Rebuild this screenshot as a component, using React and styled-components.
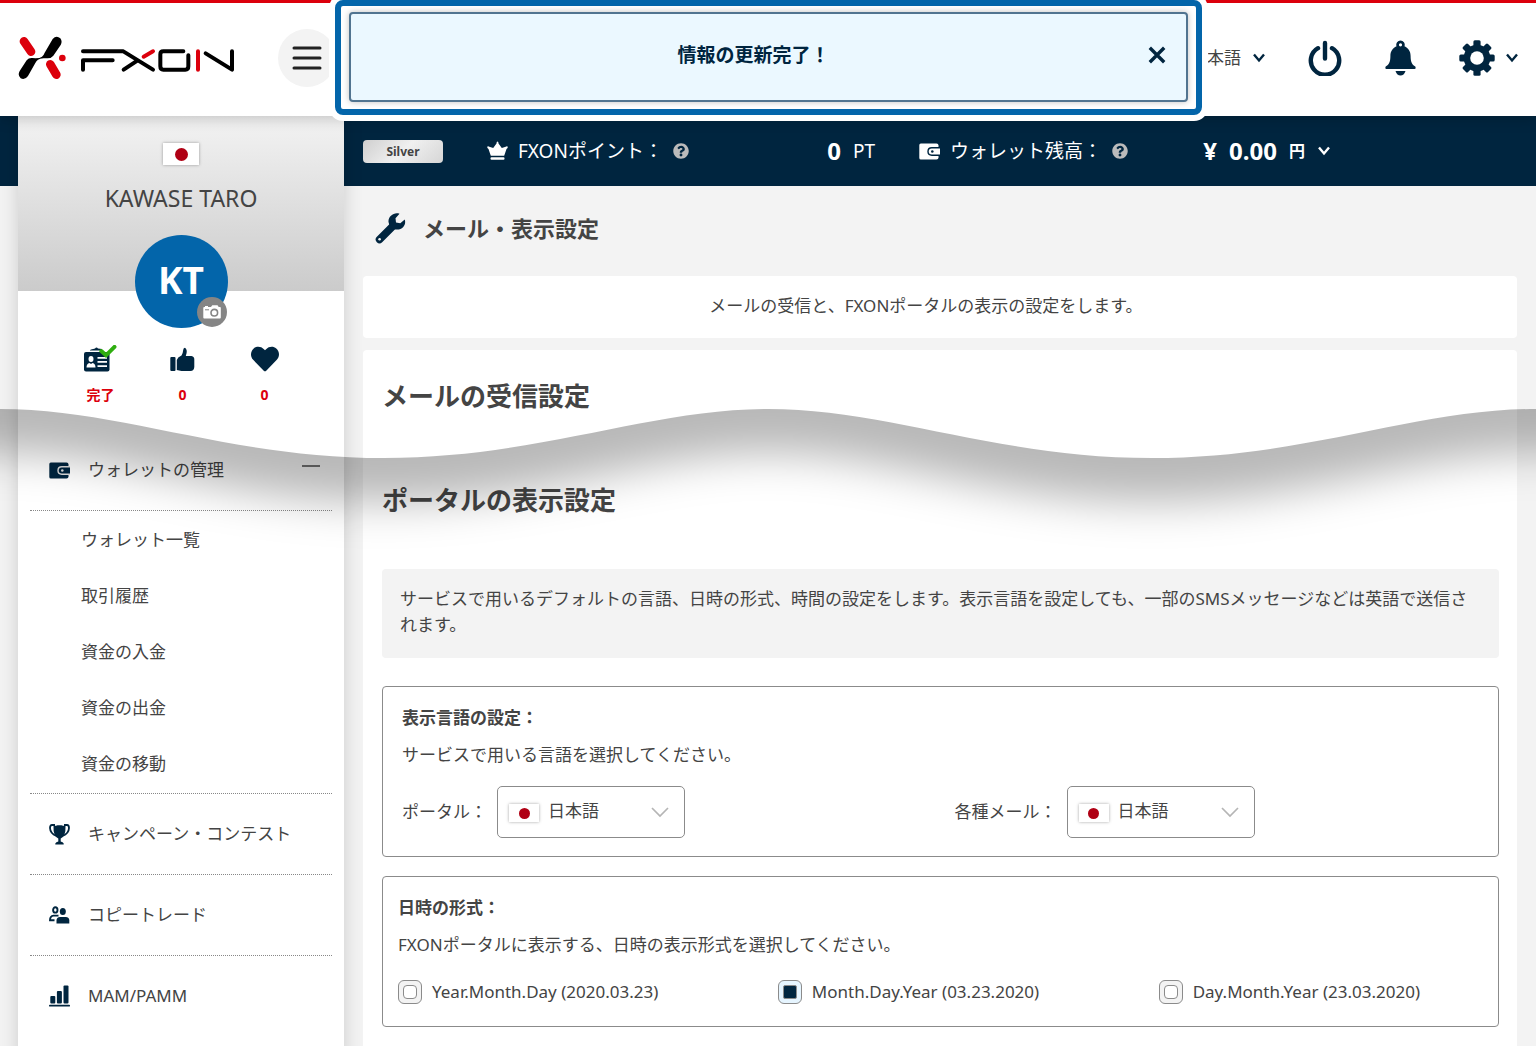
import React from "react";
import styled, { createGlobalStyle, css } from "styled-components";
import { FaHeart, FaQuestionCircle } from "react-icons/fa";

const navy = "#00253f";
const red = "#dc000c";
const blue = "#0365aa";
const ink = "#444";

const GlobalStyle = createGlobalStyle`
  *, *::before, *::after { box-sizing: border-box; }
  body {
    margin: 0;
    background: #f3f3f3;
    color: ${ink};
    font: 400 17px/26px "Noto Sans", "Noto Sans CJK JP", sans-serif;
  }
  h1, h2, h3, p, ul { margin: 0; padding: 0; }
  ul { list-style: none; }
  button, select { font: inherit; color: inherit; }
  a { color: inherit; text-decoration: none; }
  svg { display: block; flex: none; }
`;

/* ---------- layout ---------- */

const Page = styled.div`
  position: relative;
  display: flex;
  flex-direction: column;
  min-height: 100vh;
  overflow: hidden;
`;

const Header = styled.header`
  position: relative;
  z-index: 2;
  display: flex;
  align-items: center;
  height: 116px;
  padding: 0 18px 3px;
  border-top: 3px solid ${red};
  background: #fff;
  box-shadow: 0 2px 14px rgba(0, 0, 0, 0.22);
`;

const Body = styled.div`
  flex: 1;
  display: flex;
  padding-left: 18px;
  background: linear-gradient(${navy} 70px, #f3f3f3 70px);
`;

const Sidebar = styled.aside`
  position: relative;
  flex: none;
  width: 326px;
  background: #fff;
  box-shadow: 0 0 18px rgba(0, 0, 0, 0.16);
`;

const Main = styled.main`
  flex: 1;
  min-width: 0;
  display: flex;
  flex-direction: column;
`;

/* ---------- header ---------- */

const PlainButton = styled.button`
  display: flex;
  align-items: center;
  justify-content: center;
  padding: 0;
  border: 0;
  background: none;
  color: ${navy};
  cursor: pointer;
`;

const MenuButton = styled(PlainButton)`
  width: 58px;
  height: 58px;
  margin-left: 43px;
  border-radius: 50%;
  background: #f3f3f3;
  color: #222;
`;

const HeaderTools = styled.div`
  display: flex;
  align-items: center;
  margin-left: auto;
  gap: 43px;
`;

const GearButton = styled(PlainButton)`
  gap: 11px;
`;

const Dropdown = styled.span`
  display: inline-flex;
  align-items: center;
  gap: 12px;
  select {
    appearance: none;
    padding: 0;
    border: 0;
    background: none;
    font-size: 17px;
    cursor: pointer;
  }
  svg { color: ${navy}; }
  ${(p) => p.$bold && css`
    select { font-size: 16px; font-weight: 700; }
    svg { color: #fff; }
  `}
`;

/* ---------- notice over the header ---------- */

const NoticeFrame = styled.div`
  position: absolute;
  z-index: 3;
  top: 0;
  left: 335px;
  right: 334px;
  height: 115px;
  padding: 6px 8px 7px;
  border: 6px solid ${blue};
  border-radius: 8px;
  background: #fff;
  box-shadow: 0 0 0 6px #fff;
`;

const Notice = styled.div`
  display: flex;
  align-items: center;
  height: 90px;
  padding: 0 20px 4px 8px;
  border: 2px solid #517490;
  border-radius: 4px;
  background: #ebf8ff;
  color: ${navy};
  box-shadow: 0 0 6px rgba(0, 0, 0, 0.25);
`;

const NoticeText = styled.p`
  flex: 1;
  text-align: center;
  font-size: 19px;
  font-weight: 700;
`;

/* ---------- sidebar ---------- */

const Profile = styled.div`
  display: flex;
  flex-direction: column;
  align-items: center;
  height: 175px;
  padding-top: 27px;
  background: linear-gradient(#f3f3f3, #cbcbcb);
`;

const Flag = styled.span`
  display: flex;
  align-items: center;
  justify-content: center;
  flex: none;
  width: ${(p) => (p.$large ? 36 : 30)}px;
  height: ${(p) => (p.$large ? 22 : 18)}px;
  background: #fff;
  box-shadow: 0 0 3px rgba(0, 0, 0, 0.35);
  &::before {
    content: "";
    width: ${(p) => (p.$large ? 13 : 11)}px;
    height: ${(p) => (p.$large ? 13 : 11)}px;
    border-radius: 50%;
    background: #b00014;
  }
`;

const UserName = styled.p`
  margin-top: 20px;
  font-size: 23px;
`;

const Avatar = styled.div`
  position: relative;
  display: flex;
  flex: none;
  align-items: center;
  justify-content: center;
  width: 93px;
  height: 93px;
  margin-top: 24px;
  padding-bottom: 4px;
  border-radius: 50%;
  background: ${blue};
  color: #fff;
  font-family: "Open Sans", "Noto Sans", sans-serif;
  font-size: 37px;
  font-weight: 700;
`;

const CameraButton = styled(PlainButton)`
  position: absolute;
  right: 1px;
  bottom: 1px;
  width: 30px;
  height: 30px;
  border-radius: 50%;
  background: #858585;
  color: #fff;
`;

const Stats = styled.ul`
  display: flex;
  justify-content: center;
  height: 139px;
  padding: 52px 0 0 3px;
  li {
    display: flex;
    flex-direction: column;
    align-items: center;
    gap: 8px;
    width: 82px;
    color: ${navy};
  }
  strong {
    color: ${red};
    font-size: 14px;
    line-height: 24px;
  }
`;

const StatIcon = styled.span`
  display: flex;
  align-items: center;
  height: 32px;
`;

const Nav = styled.nav`
  margin: 0 12px;
`;

const NavGroup = styled.div`
  border-bottom: 1px dotted #888;
  &:last-child { border-bottom: 0; }
`;

const NavItem = styled.a`
  display: flex;
  align-items: center;
  height: 80px;
  padding: 0 12px 0 19px;
  gap: 18px;
  svg { color: ${navy}; }
`;

const Minus = styled.span`
  width: 18px;
  height: 2px;
  margin: 0 0 8px auto;
  background: #777;
`;

const SubList = styled.ul`
  padding: 1px 0 1px 51px;
  border-top: 1px dotted #888;
  a {
    display: flex;
    align-items: center;
    height: 56px;
  }
`;

/* ---------- main column ---------- */

const StatusBar = styled.div`
  display: flex;
  align-items: center;
  gap: 44px;
  height: 70px;
  padding: 0 19px;
  background: ${navy};
  color: #fff;
  font-size: 19px;
`;

const Rank = styled.span`
  width: 80px;
  height: 23px;
  border-radius: 4px;
  background: linear-gradient(135deg, #cfcfcf, #f0f0f0 50%, #d6d6d6);
  color: ${ink};
  text-align: center;
  font-size: 12px;
  font-weight: 700;
  line-height: 23px;
`;

const StatusGroup = styled.div`
  display: flex;
  align-items: center;
  justify-content: space-between;
  width: ${(p) => p.$width}px;
`;

const StatusLabel = styled.span`
  display: flex;
  align-items: center;
  gap: 10px;
`;

const HelpButton = styled(PlainButton)`
  color: #bbb;
`;

const Amount = styled.span`
  display: flex;
  align-items: center;
  gap: 12px;
  strong { font-size: 24px; }
`;

const TitleRow = styled.div`
  display: flex;
  align-items: center;
  gap: 17px;
  height: 90px;
  padding: 0 31px 6px;
  svg { color: ${navy}; }
  h1 { font-size: 22px; }
`;

const Content = styled.div`
  flex: 1;
  display: flex;
  flex-direction: column;
  gap: 12px;
  padding: 0 19px;
`;

const Intro = styled.p`
  padding: 17px 46px 19px 18px;
  border-radius: 4px;
  background: #fff;
  text-align: center;
`;

const Panel = styled.section`
  flex: 1;
  display: flex;
  flex-direction: column;
  padding: 0 18px 18px 19px;
  border-radius: 4px 4px 0 0;
  background: #fff;
`;

const SectionTitle = styled.h2`
  padding-top: 26px;
  height: 104px;
  font-size: 26px;
  line-height: 40px;
`;

const Note = styled.p`
  margin: 11px 0 28px;
  padding: 17px 28px 20px 18px;
  border-radius: 4px;
  background: #f3f3f3;
`;

const Card = styled.section`
  margin-bottom: 19px;
  padding: 18px ${(p) => p.$side}px;
  border: 1px solid #8b8b8b;
  border-radius: 4px;
  h3 { font-size: 17px; line-height: 26px; }
  h3 + p { margin-top: 11px; }
`;

const SelectRow = styled.div`
  display: grid;
  grid-template-columns: 1fr 1fr;
  gap: 28px;
  margin-top: 18px;
`;

const Field = styled.div`
  display: flex;
  align-items: center;
  gap: 10px;
`;

const SelectBox = styled.span`
  position: relative;
  width: 188px;
  height: 52px;
  select {
    appearance: none;
    width: 100%;
    height: 100%;
    padding: 0 40px 2px 50px;
    border: 1px solid #8b8b8b;
    border-radius: 5px;
    background: #fff;
  }
`;

const SelectFlag = styled(Flag)`
  position: absolute;
  left: 12px;
  top: 18px;
  pointer-events: none;
`;

const SelectArrow = styled.svg`
  position: absolute;
  right: 16px;
  top: 21px;
  pointer-events: none;
`;

const RadioRow = styled.div`
  display: flex;
  justify-content: space-between;
  margin-top: 21px;
  padding: 0 63px 3px 0;
`;

const RadioLabel = styled.label`
  display: flex;
  align-items: center;
  gap: 10px;
`;

const SquareRadio = styled.input`
  appearance: none;
  display: grid;
  place-items: center;
  width: 24px;
  height: 24px;
  margin: 0;
  border: 1px solid #8b8b8b;
  border-radius: 6px;
  background: #f3f3f3;
  &::before {
    content: "";
    width: 14px;
    height: 14px;
    border: 1px solid #8b8b8b;
    border-radius: 4px;
    background: #fff;
  }
  &:checked { background: #e6f5ff; }
  &:checked::before { background: ${navy}; border-radius: 2px; }
`;

/* Torn-page wave lying over both columns */
const Wave = styled.svg`
  position: absolute;
  z-index: 1;
  left: 0;
  top: 400px;
  width: 100%;
  height: 180px;
  pointer-events: none;
`;

/* ---------- drawings ---------- */

const Logo = () => (
  <svg width="217" height="44" viewBox="54 108 651 132" fill="none" strokeLinecap="round" strokeLinejoin="round" role="img" aria-label="FXON">
    <path d="M72 124L93 155M151 193L169 224" stroke={red} strokeWidth="26" />
    <circle cx="187" cy="174" r="10" fill={red} />
    <path
      fill="#000"
      d="M158 117Q169 105 181 115Q188 124 182 135L160 167Q153 176 140 175Q120 173 114 179Q110 182 106 189L84 228Q75 241 62 235Q52 226 59 213L80 181Q86 173 97 174Q118 176 126 170Q131 166 134 158Z"
    />
    <g stroke="#000" strokeWidth="12">
      <path d="M249 154H370L459 209M249 209V181H338M371 209L412 182" />
      <path d="M550 154H490Q481 154 481 163V199Q481 209 490 209H556Q565 209 565 199V166" />
      <path d="M617 160L696 209V154" />
    </g>
    <path d="M431 170L459 154M594 154V209" stroke={red} strokeWidth="12" />
  </svg>
);

const MenuIcon = () => (
  <svg width="30" height="26" viewBox="0 0 30 26" stroke="currentColor" strokeWidth="3" strokeLinecap="round">
    <path d="M2 3H28M2 13H28M2 23H28" />
  </svg>
);

const Chevron = () => (
  <svg width="12" height="10" viewBox="0 0 12 10" fill="none" stroke="currentColor" strokeWidth="2.4">
    <path d="M1 1.500L6 7.500L11 1.500" />
  </svg>
);

const CloseIcon = () => (
  <svg width="18" height="18" viewBox="0 0 18 18" stroke="currentColor" strokeWidth="3.400">
    <path d="M1.800 1.800L16.200 16.200M16.200 1.800L1.800 16.200" />
  </svg>
);

const PowerIcon = () => (
  <svg width="34" height="36" viewBox="0 0 34 36" fill="none" stroke="currentColor" strokeWidth="4.400" strokeLinecap="round">
    <path d="M10 8.200A14.200 14.200 0 1 0 24 8.200M17 3V18.500" />
  </svg>
);

const BellIcon = () => (
  <svg width="31" height="36" viewBox="0 0 31 36" fill="currentColor">
    <path
      fillRule="evenodd"
      d="M15.500 0.500A4.300 4.300 0 0 1 19.500 6.200C23.500 8 25.600 11.500 25.600 16C25.600 22 27 24.600 30.300 26.500Q31.300 29 29.500 29H1.500Q-0.300 29 0.700 26.500C4 24.600 5.400 22 5.400 16C5.400 11.500 7.500 8 11.500 6.200A4.300 4.300 0 0 1 15.500 0.500ZM15.500 3.200A1.600 1.600 0 1 0 15.500 6.400A1.600 1.600 0 1 0 15.500 3.200Z"
    />
    <path d="M10.500 31H20.500Q19 35.500 15.500 35.500T10.500 31Z" />
  </svg>
);

const GearIcon = () => (
  <svg width="36" height="36" viewBox="-18 -18 36 36" fill="currentColor">
    {[0, 45, 90, 135].map((angle) => (
      <rect key={angle} x="-3.600" y="-17.700" width="7.200" height="35.400" rx="1.500" transform={`rotate(${angle})`} />
    ))}
    <circle r="13.300" />
    <circle r="6.800" fill="#fff" />
  </svg>
);

const CameraIcon = () => (
  <svg width="18" height="14" viewBox="0 0 18 14">
    <path fill="currentColor" d="M2 2V1H5V2H8L9.300 0.300H14.500L15.700 2H17Q17.800 2 17.800 3V12.500Q17.800 13.500 17 13.500H1.200Q0.300 13.500 0.300 12.500V3Q0.300 2 1.200 2Z" />
    <circle cx="11.300" cy="7.700" r="3.300" fill="none" stroke="#858585" strokeWidth="1.600" />
    <path d="M2 4.800H6" stroke="#858585" />
  </svg>
);

const IdCardIcon = () => (
  <svg width="33" height="28" viewBox="0 0 33 28">
    <path fill="currentColor" d="M6 5Q10 3.500 11 3.500Q12.500 1.500 14 3.500L18 4V5.500H6Z" />
    <rect y="7" width="25.500" height="19.500" rx="2" fill="currentColor" />
    <g fill="#fff">
      <ellipse cx="7" cy="14" rx="2.500" ry="2.900" />
      <path d="M2.500 22.500Q2.500 18.500 5.500 18L7 19L8.500 18Q11.500 18.500 11.500 22.500Z" />
      <path d="M13.500 12H23V13.700H13.500ZM13.500 16H23V17.700H13.500ZM13.500 20.300H23V22H13.500Z" />
    </g>
    <path d="M17.300 6L22 10.300L30.500 1.800" fill="none" stroke="#2fae10" strokeWidth="4" strokeLinecap="round" />
  </svg>
);

const ThumbIcon = () => (
  <svg width="25" height="25" viewBox="0 0 25 25" fill="currentColor">
    <rect x="0.300" y="10" width="5.200" height="14" rx="1" />
    <path d="M6.800 13L8.300 10.500L11.500 8.500Q13 6 13.200 3Q13.500 0.800 15 0.800Q17.300 2.500 16.600 6L15.800 9H21.500Q24.500 9.500 24.300 12.500V20Q24 24 20.500 24H11.500L6.800 23Z" />
  </svg>
);

const WrenchIcon = () => (
  <svg width="31" height="31" viewBox="0 0 31 31">
    <path d="M4.500 26.500L18 13" stroke="currentColor" strokeWidth="7.500" strokeLinecap="round" />
    <path fill="currentColor" d="M24.500 0.800L20.500 5.200L21 9.500L25.300 10.200L29.700 6.500C31.500 11 28 17.500 20.500 16.500L15 14.500L13.500 9C13 3.500 19 -1.200 24.500 0.800Z" />
    <circle cx="4.600" cy="26.300" r="1.300" fill="#f3f3f3" />
  </svg>
);

const WalletIcon = ({ clasp }) => (
  <svg width="21" height="17" viewBox="0 0 21 17">
    <path fill="currentColor" d="M1.800 0.500H17.500Q19.500 0.500 19.500 2.500V14.500Q19.500 16.500 17.500 16.500H1.800Q0.300 16.500 0.300 15V2Q0.300 0.500 1.800 0.500Z" />
    <path fill="currentColor" stroke={clasp} strokeWidth="1.400" d="M22 4.800H12.800Q9 4.800 9 8.500T12.800 12.200H22Z" />
    <circle cx="13.300" cy="8.500" r="1.300" fill={clasp} />
  </svg>
);

const CrownIcon = () => (
  <svg width="21" height="20" viewBox="0 0 21 20" fill="currentColor">
    <path d="M3.800 14.800L1.500 8Q0 7.200 0.200 5.800Q1 4.500 2.300 5.800L6.200 7L9.500 2.500Q9.500 0.500 10.500 0.500T11.500 2.500L14.800 7L18.700 5.800Q20 4.500 20.800 5.800Q21 7.200 19.500 8L17.200 14.800Z" />
    <rect x="3.500" y="16.300" width="14" height="2.400" rx="1" />
  </svg>
);

const TrophyIcon = () => (
  <svg width="21" height="22" viewBox="0 0 21 22">
    <path fill="none" stroke="currentColor" strokeWidth="1.800" d="M6 2H3Q1 2 1 5Q1.200 10.500 7.500 13M15 2H18Q20 2 20 5Q19.800 10.500 13.500 13" />
    <path fill="currentColor" d="M4.500 3Q7.500 3 8.500 2.200H12.500Q13.500 3 16.500 3Q17 13 11.700 15.500V18.500Q14 19 14.700 20.500V21.500H6.300V20.500Q7 19 9.300 18.500V15.500Q4 13 4.500 3Z" />
  </svg>
);

const PeopleIcon = () => (
  <svg width="21" height="18" viewBox="0 0 21 18">
    <g fill="none" stroke="currentColor" strokeWidth="1.900">
      <ellipse cx="6.300" cy="3.900" rx="2.200" ry="2.700" />
      <path d="M9.500 9.600H4.500Q1 10 1 14.300H5.500" />
    </g>
    <ellipse cx="13.800" cy="5.400" rx="3" ry="3.500" fill="currentColor" />
    <path fill="currentColor" d="M7.500 17.500V14.500Q7.500 11 11 11H16.800Q20.300 11 20.300 14.500V17.500Z" />
  </svg>
);

const BarsIcon = () => (
  <svg width="21" height="22" viewBox="0 0 21 22" fill="currentColor">
    <rect x="1.300" y="11" width="5" height="7.500" rx="1" />
    <rect x="7.900" y="6" width="5" height="12.500" rx="1" />
    <rect x="14.500" y="0.500" width="5" height="18" rx="1" />
    <rect y="19.700" width="21" height="1.900" rx="0.900" />
  </svg>
);

const wavePath = "C120 9 230 58 384 58S648 9 768 9S998 58 1152 58S1416 9 1536 9";

const WaveShadow = () => (
  <Wave viewBox="0 0 1536 180" preserveAspectRatio="none" aria-hidden="true">
    <defs>
      <clipPath id="below-wave">
        <path d={`M0 9${wavePath}V180H0Z`} />
      </clipPath>
      <filter id="wave-blur" filterUnits="userSpaceOnUse" x="-200" y="-200" width="1936" height="500">
        <feGaussianBlur stdDeviation="22" />
      </filter>
    </defs>
    <g clipPath="url(#below-wave)">
      <g transform="translate(0 44)" filter="url(#wave-blur)">
        <path d={`M-200 -190V9H0${wavePath}H1736V-190Z`} fillOpacity="0.280" />
      </g>
    </g>
  </Wave>
);

/* ---------- parts ---------- */

const Help = () => (
  <HelpButton aria-label="ヘルプ">
    <FaQuestionCircle size={16} />
  </HelpButton>
);

const LanguageField = ({ id, label }) => (
  <Field>
    <label htmlFor={id}>{label}</label>
    <SelectBox>
      <select id={id} defaultValue="ja">
        <option value="ja">日本語</option>
      </select>
      <SelectFlag />
      <SelectArrow width="18" height="11" viewBox="0 0 18 11" fill="none" stroke="#b5b5b5" strokeWidth="1.700">
        <path d="M1 1L9 9L17 1" />
      </SelectArrow>
    </SelectBox>
  </Field>
);

const walletLinks = ["ウォレット一覧", "取引履歴", "資金の入金", "資金の出金", "資金の移動"];

const navItems = [
  { label: "キャンペーン・コンテスト", icon: <TrophyIcon /> },
  { label: "コピートレード", icon: <PeopleIcon /> },
  { label: "MAM/PAMM", icon: <BarsIcon /> },
];

const dateFormats = [
  "Year.Month.Day (2020.03.23)",
  "Month.Day.Year (03.23.2020)",
  "Day.Month.Year (23.03.2020)",
];

export default function App() {
  return (
    <Page>
      <GlobalStyle />
      <Header>
        <Logo />
        <MenuButton aria-label="メニュー"><MenuIcon /></MenuButton>
        <HeaderTools>
          <Dropdown>
            <select aria-label="言語" defaultValue="ja">
              <option value="ja">日本語</option>
            </select>
            <Chevron />
          </Dropdown>
          <PlainButton aria-label="ログアウト"><PowerIcon /></PlainButton>
          <PlainButton aria-label="通知"><BellIcon /></PlainButton>
          <GearButton aria-label="設定"><GearIcon /><Chevron /></GearButton>
        </HeaderTools>
      </Header>

      <NoticeFrame>
        <Notice role="status">
          <NoticeText>情報の更新完了！</NoticeText>
          <PlainButton aria-label="閉じる"><CloseIcon /></PlainButton>
        </Notice>
      </NoticeFrame>

      <Body>
        <Sidebar>
          <Profile>
            <Flag $large />
            <UserName>KAWASE TARO</UserName>
            <Avatar>
              KT
              <CameraButton aria-label="写真を変更"><CameraIcon /></CameraButton>
            </Avatar>
          </Profile>
          <Stats>
            <li><StatIcon><IdCardIcon /></StatIcon><strong>完了</strong></li>
            <li><StatIcon><ThumbIcon /></StatIcon><strong>0</strong></li>
            <li><StatIcon><FaHeart size={28} /></StatIcon><strong>0</strong></li>
          </Stats>
          <Nav>
            <NavGroup>
              <NavItem href="#wallet">
                <WalletIcon clasp="#ddd" />
                ウォレットの管理
                <Minus />
              </NavItem>
              <SubList>
                {walletLinks.map((label) => (
                  <li key={label}><a href="#wallet">{label}</a></li>
                ))}
              </SubList>
            </NavGroup>
            {navItems.map(({ label, icon }) => (
              <NavGroup key={label}>
                <NavItem href="#menu">{icon}{label}</NavItem>
              </NavGroup>
            ))}
          </Nav>
        </Sidebar>

        <Main>
          <StatusBar>
            <Rank>Silver</Rank>
            <StatusGroup $width={388}>
              <StatusLabel><CrownIcon />FXONポイント：<Help /></StatusLabel>
              <Amount><strong>0</strong>PT</Amount>
            </StatusGroup>
            <StatusGroup $width={411}>
              <StatusLabel><WalletIcon clasp={navy} />ウォレット残高：<Help /></StatusLabel>
              <Amount>
                <strong>¥</strong>
                <strong>0.00</strong>
                <Dropdown $bold>
                  <select aria-label="通貨" defaultValue="jpy">
                    <option value="jpy">円</option>
                  </select>
                  <Chevron />
                </Dropdown>
              </Amount>
            </StatusGroup>
          </StatusBar>

          <TitleRow>
            <WrenchIcon />
            <h1>メール・表示設定</h1>
          </TitleRow>

          <Content>
            <Intro>メールの受信と、FXONポータルの表示の設定をします。</Intro>
            <Panel>
              <SectionTitle>メールの受信設定</SectionTitle>
              <SectionTitle>ポータルの表示設定</SectionTitle>
              <Note>
                サービスで用いるデフォルトの言語、日時の形式、時間の設定をします。表示言語を設定しても、一部のSMSメッセージなどは英語で送信されます。
              </Note>
              <Card $side={19}>
                <h3>表示言語の設定：</h3>
                <p>サービスで用いる言語を選択してください。</p>
                <SelectRow>
                  <LanguageField id="portal-language" label="ポータル：" />
                  <LanguageField id="mail-language" label="各種メール：" />
                </SelectRow>
              </Card>
              <Card $side={15}>
                <h3 id="date-format">日時の形式：</h3>
                <p>FXONポータルに表示する、日時の表示形式を選択してください。</p>
                <RadioRow role="radiogroup" aria-labelledby="date-format">
                  {dateFormats.map((format, index) => (
                    <RadioLabel key={format}>
                      <SquareRadio type="radio" name="date-format" value={format} defaultChecked={index === 1} />
                      {format}
                    </RadioLabel>
                  ))}
                </RadioRow>
              </Card>
            </Panel>
          </Content>
        </Main>
      </Body>
      <WaveShadow />
    </Page>
  );
}
